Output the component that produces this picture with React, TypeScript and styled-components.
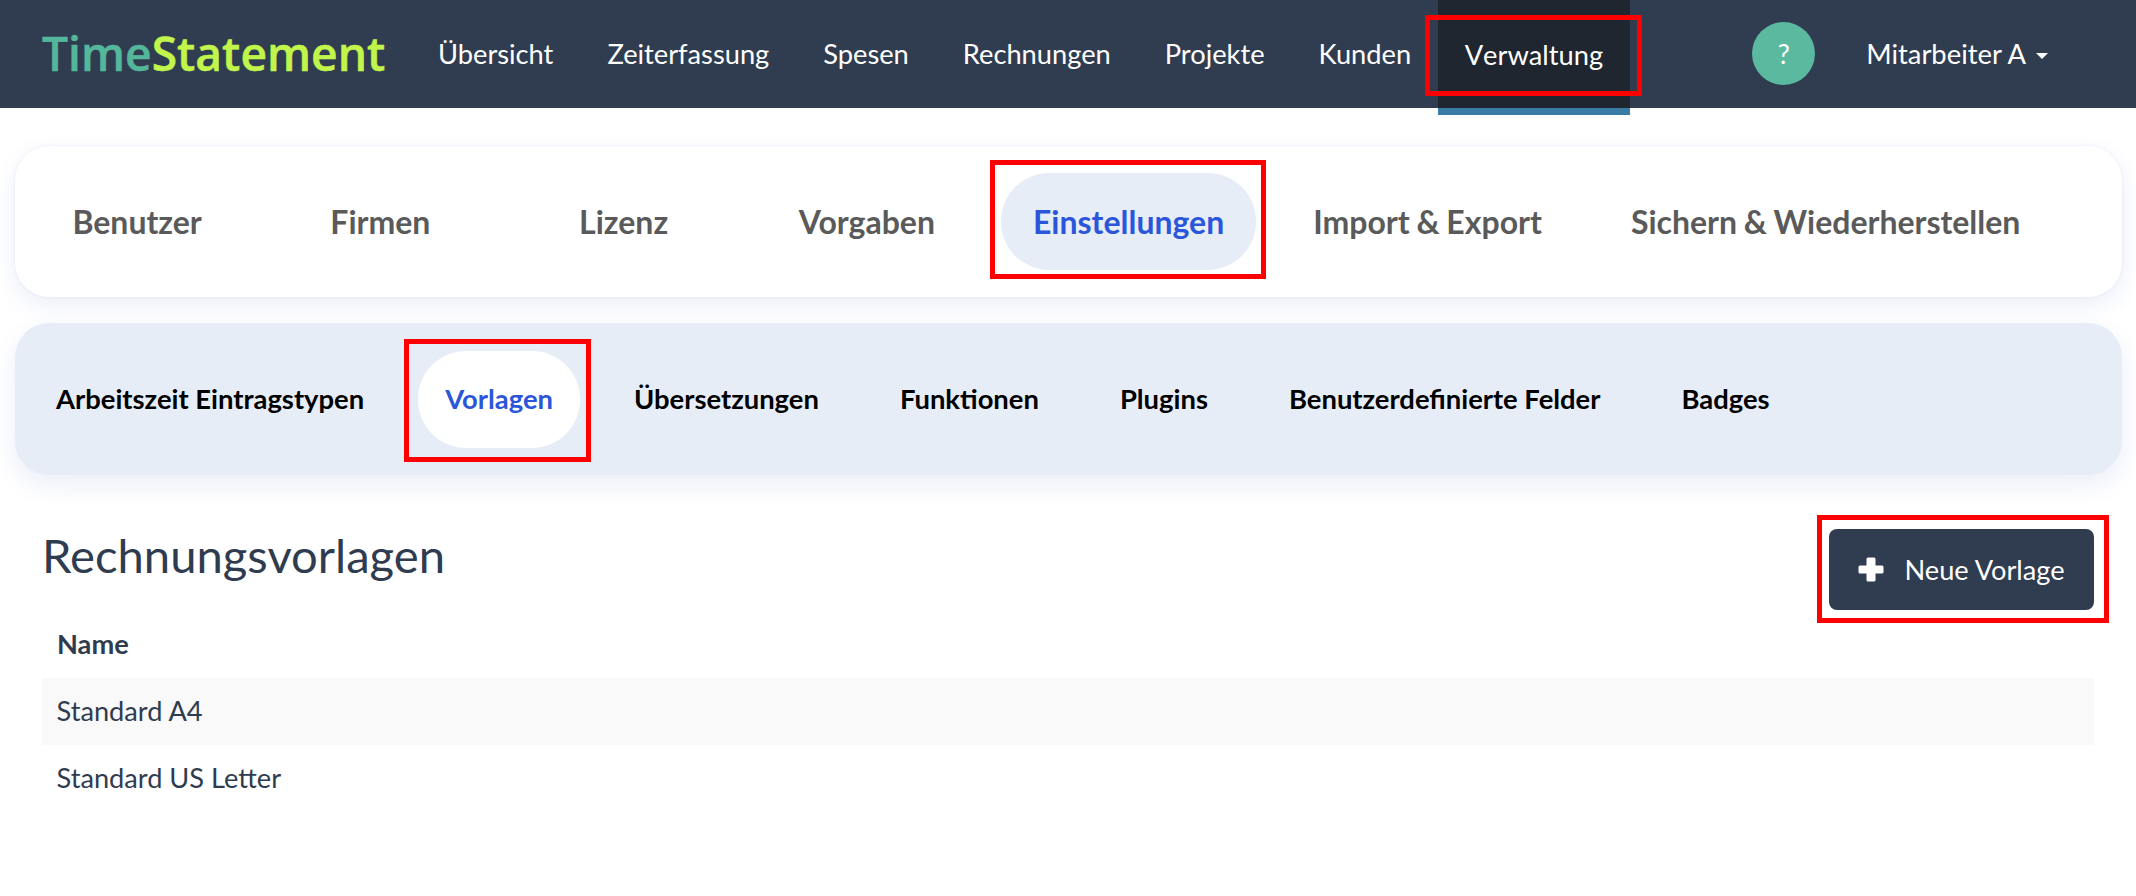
import React from "react";
import styled, { createGlobalStyle } from "styled-components";

const Global = createGlobalStyle`
  html, body { margin: 0; padding: 0; background: #fff; }
  body { font-family: Lato, "Noto Sans", sans-serif; color: #2f3c4f; }
  * { box-sizing: border-box; }
`;

const Page = styled.div`
  width: 2136px;
  height: 896px;
  overflow: hidden;
  background: #fff;
`;

const Nav = styled.header`
  display: flex;
  align-items: stretch;
  height: 108px;
  background: #303d50;
  padding: 0 88px 0 42px;
`;

const Logo = styled.div`
  display: flex;
  align-items: center;
  width: 343px;
  margin-right: 26px;
  font-family: "Open Sans", sans-serif;
  font-size: 46.2px;
  font-weight: 600;
  -webkit-text-stroke: 0.5px currentColor;
  padding-bottom: 2px;
`;

const LogoPart = styled.span<{ $color: string }>`
  color: ${(p) => p.$color};
`;

const NavLink = styled.a<{ $active?: boolean }>`
  position: relative;
  display: flex;
  align-items: center;
  padding: 0 27px 1px;
  font-size: 27.25px;
  color: #fff;
  white-space: nowrap;
  ${(p) =>
    p.$active &&
    `
    background: #1f2630;
    height: 115px;
    border-bottom: 7px solid #3a7ca5;
    padding: 0 26.5px 0;
    font-kerning: none;
  `}
`;

const NavRight = styled.div`
  margin-left: auto;
  display: flex;
  align-items: center;
`;

const Help = styled.div`
  width: 63px;
  height: 63px;
  border-radius: 50%;
  background: #5bb99f;
  color: #fff;
  font-size: 27px;
  display: flex;
  align-items: center;
  justify-content: center;
  margin-right: 51px;
  margin-top: -1px;
`;

const User = styled.div`
  display: flex;
  align-items: center;
  color: #fff;
  font-size: 27.4px;
  gap: 10px;
  padding-bottom: 1px;
`;

const Caret = styled.span`
  width: 0;
  height: 0;
  border-left: 6px solid transparent;
  border-right: 6px solid transparent;
  border-top: 6px solid #fff;
  margin-top: 4px;
`;

const MainTabs = styled.nav`
  display: flex;
  gap: 25px;
  margin: 38px 14px 0 15px;
  height: 151px;
  padding: 27px 13px;
  border-radius: 34px;
  background: #fff;
  box-shadow: 0 0 3px rgba(70, 100, 200, 0.1), 0 8px 22px rgba(70, 100, 200, 0.11);
`;

const MainTab = styled.a<{ $active?: boolean }>`
  position: relative;
  min-width: 218.25px;
  height: 97px;
  padding: 0 32px;
  display: flex;
  align-items: center;
  justify-content: center;
  border-radius: 48px;
  font-size: 32px;
  font-weight: 700;
  word-spacing: -1px;
  white-space: nowrap;
  color: ${(p) => (p.$active ? "#2b56d9" : "#5a5a5a")};
  background: ${(p) => (p.$active ? "#e7edf7" : "transparent")};
`;

const SubTabs = styled.nav`
  display: flex;
  gap: 27px;
  margin: 26px 14px 0 15px;
  height: 152px;
  padding: 28px 14px;
  border-radius: 34px;
  background: #e7edf7;
  box-shadow: 0 10px 24px rgba(70, 100, 200, 0.11);
`;

const SubTab = styled.a<{ $active?: boolean }>`
  position: relative;
  height: 97px;
  padding: 0 27px 2px;
  display: flex;
  align-items: center;
  border-radius: 48px;
  font-size: 27.4px;
  font-weight: 700;
  white-space: nowrap;
  color: ${(p) => (p.$active ? "#2b56d9" : "#000")};
  background: ${(p) => (p.$active ? "#fff" : "transparent")};
`;

const Content = styled.main`
  padding: 54px 42px 0;
`;

const HeadRow = styled.div`
  display: flex;
  justify-content: space-between;
  align-items: flex-start;
  height: 81px;
`;

const Title = styled.h2`
  margin: 0;
  font-size: 47.2px;
  font-weight: 400;
  line-height: 52px;
  color: #2f3c4f;
`;

const AddButton = styled.button`
  position: relative;
  width: 265px;
  height: 81px;
  border: 0;
  border-radius: 8px;
  background: #303d50;
  color: #fff;
  font-family: Lato, sans-serif;
  font-size: 27.2px;
  display: flex;
  align-items: center;
  justify-content: center;
  gap: 20px;
`;

const Table = styled.table`
  width: 100%;
  border-collapse: collapse;
  margin-top: 1px;
  font-size: 27.2px;
  color: #2f3c4f;
`;

const Th = styled.th`
  height: 67px;
  padding: 0 15px 3px;
  text-align: left;
  font-weight: 700;
`;

const Row = styled.tr<{ $striped?: boolean }>`
  background: ${(p) => (p.$striped ? "#f9f9f9" : "transparent")};
`;

const Td = styled.td`
  height: 67px;
  padding: 0 15px 3px 14.5px;
`;

const Marker = styled.span<{ $t: number; $r: number; $b: number; $l: number }>`
  position: absolute;
  top: ${(p) => p.$t}px;
  right: ${(p) => p.$r}px;
  bottom: ${(p) => p.$b}px;
  left: ${(p) => p.$l}px;
  border: 5px solid #ff0000;
  pointer-events: none;
`;

const PlusIcon = () => (
  <svg width="26" height="25" viewBox="0 0 26 25" fill="#fff" aria-hidden="true">
    <rect x="0.5" y="8.5" width="25" height="8" rx="1.5" />
    <rect x="8.5" y="0.5" width="9" height="24" rx="1.5" />
  </svg>
);

const navItems = ["Übersicht", "Zeiterfassung", "Spesen", "Rechnungen", "Projekte", "Kunden"];
const mainItems = ["Benutzer", "Firmen", "Lizenz", "Vorgaben"];
const subItems = ["Übersetzungen", "Funktionen", "Plugins", "Benutzerdefinierte Felder", "Badges"];

export default function App() {
  return (
    <Page>
      <Global />
      <Nav>
        <Logo>
          <LogoPart $color="#54b79c">Time</LogoPart>
          <LogoPart $color="#c1f54c">Statement</LogoPart>
        </Logo>
        {navItems.map((n) => (
          <NavLink key={n}>{n}</NavLink>
        ))}
        <NavLink $active>
          Verwaltung
          <Marker $t={15} $r={-12} $b={12} $l={-13} />
        </NavLink>
        <NavRight>
          <Help>?</Help>
          <User>
            Mitarbeiter A
            <Caret />
          </User>
        </NavRight>
      </Nav>
      <MainTabs>
        {mainItems.map((m) => (
          <MainTab key={m}>{m}</MainTab>
        ))}
        <MainTab $active>
          Einstellungen
          <Marker $t={-13} $r={-10} $b={-9} $l={-11} />
        </MainTab>
        <MainTab>Import &amp; Export</MainTab>
        <MainTab>Sichern &amp; Wiederherstellen</MainTab>
      </MainTabs>
      <SubTabs>
        <SubTab>Arbeitszeit Eintragstypen</SubTab>
        <SubTab $active>
          Vorlagen
          <Marker $t={-12} $r={-11} $b={-14} $l={-14} />
        </SubTab>
        {subItems.map((s) => (
          <SubTab key={s}>{s}</SubTab>
        ))}
      </SubTabs>
      <Content>
        <HeadRow>
          <Title>Rechnungsvorlagen</Title>
          <AddButton>
            <PlusIcon />
            Neue Vorlage
            <Marker $t={-14} $r={-15} $b={-13} $l={-12} />
          </AddButton>
        </HeadRow>
        <Table>
          <thead>
            <tr>
              <Th>Name</Th>
            </tr>
          </thead>
          <tbody>
            <Row $striped>
              <Td>Standard A4</Td>
            </Row>
            <Row>
              <Td>Standard US Letter</Td>
            </Row>
          </tbody>
        </Table>
      </Content>
    </Page>
  );
}
